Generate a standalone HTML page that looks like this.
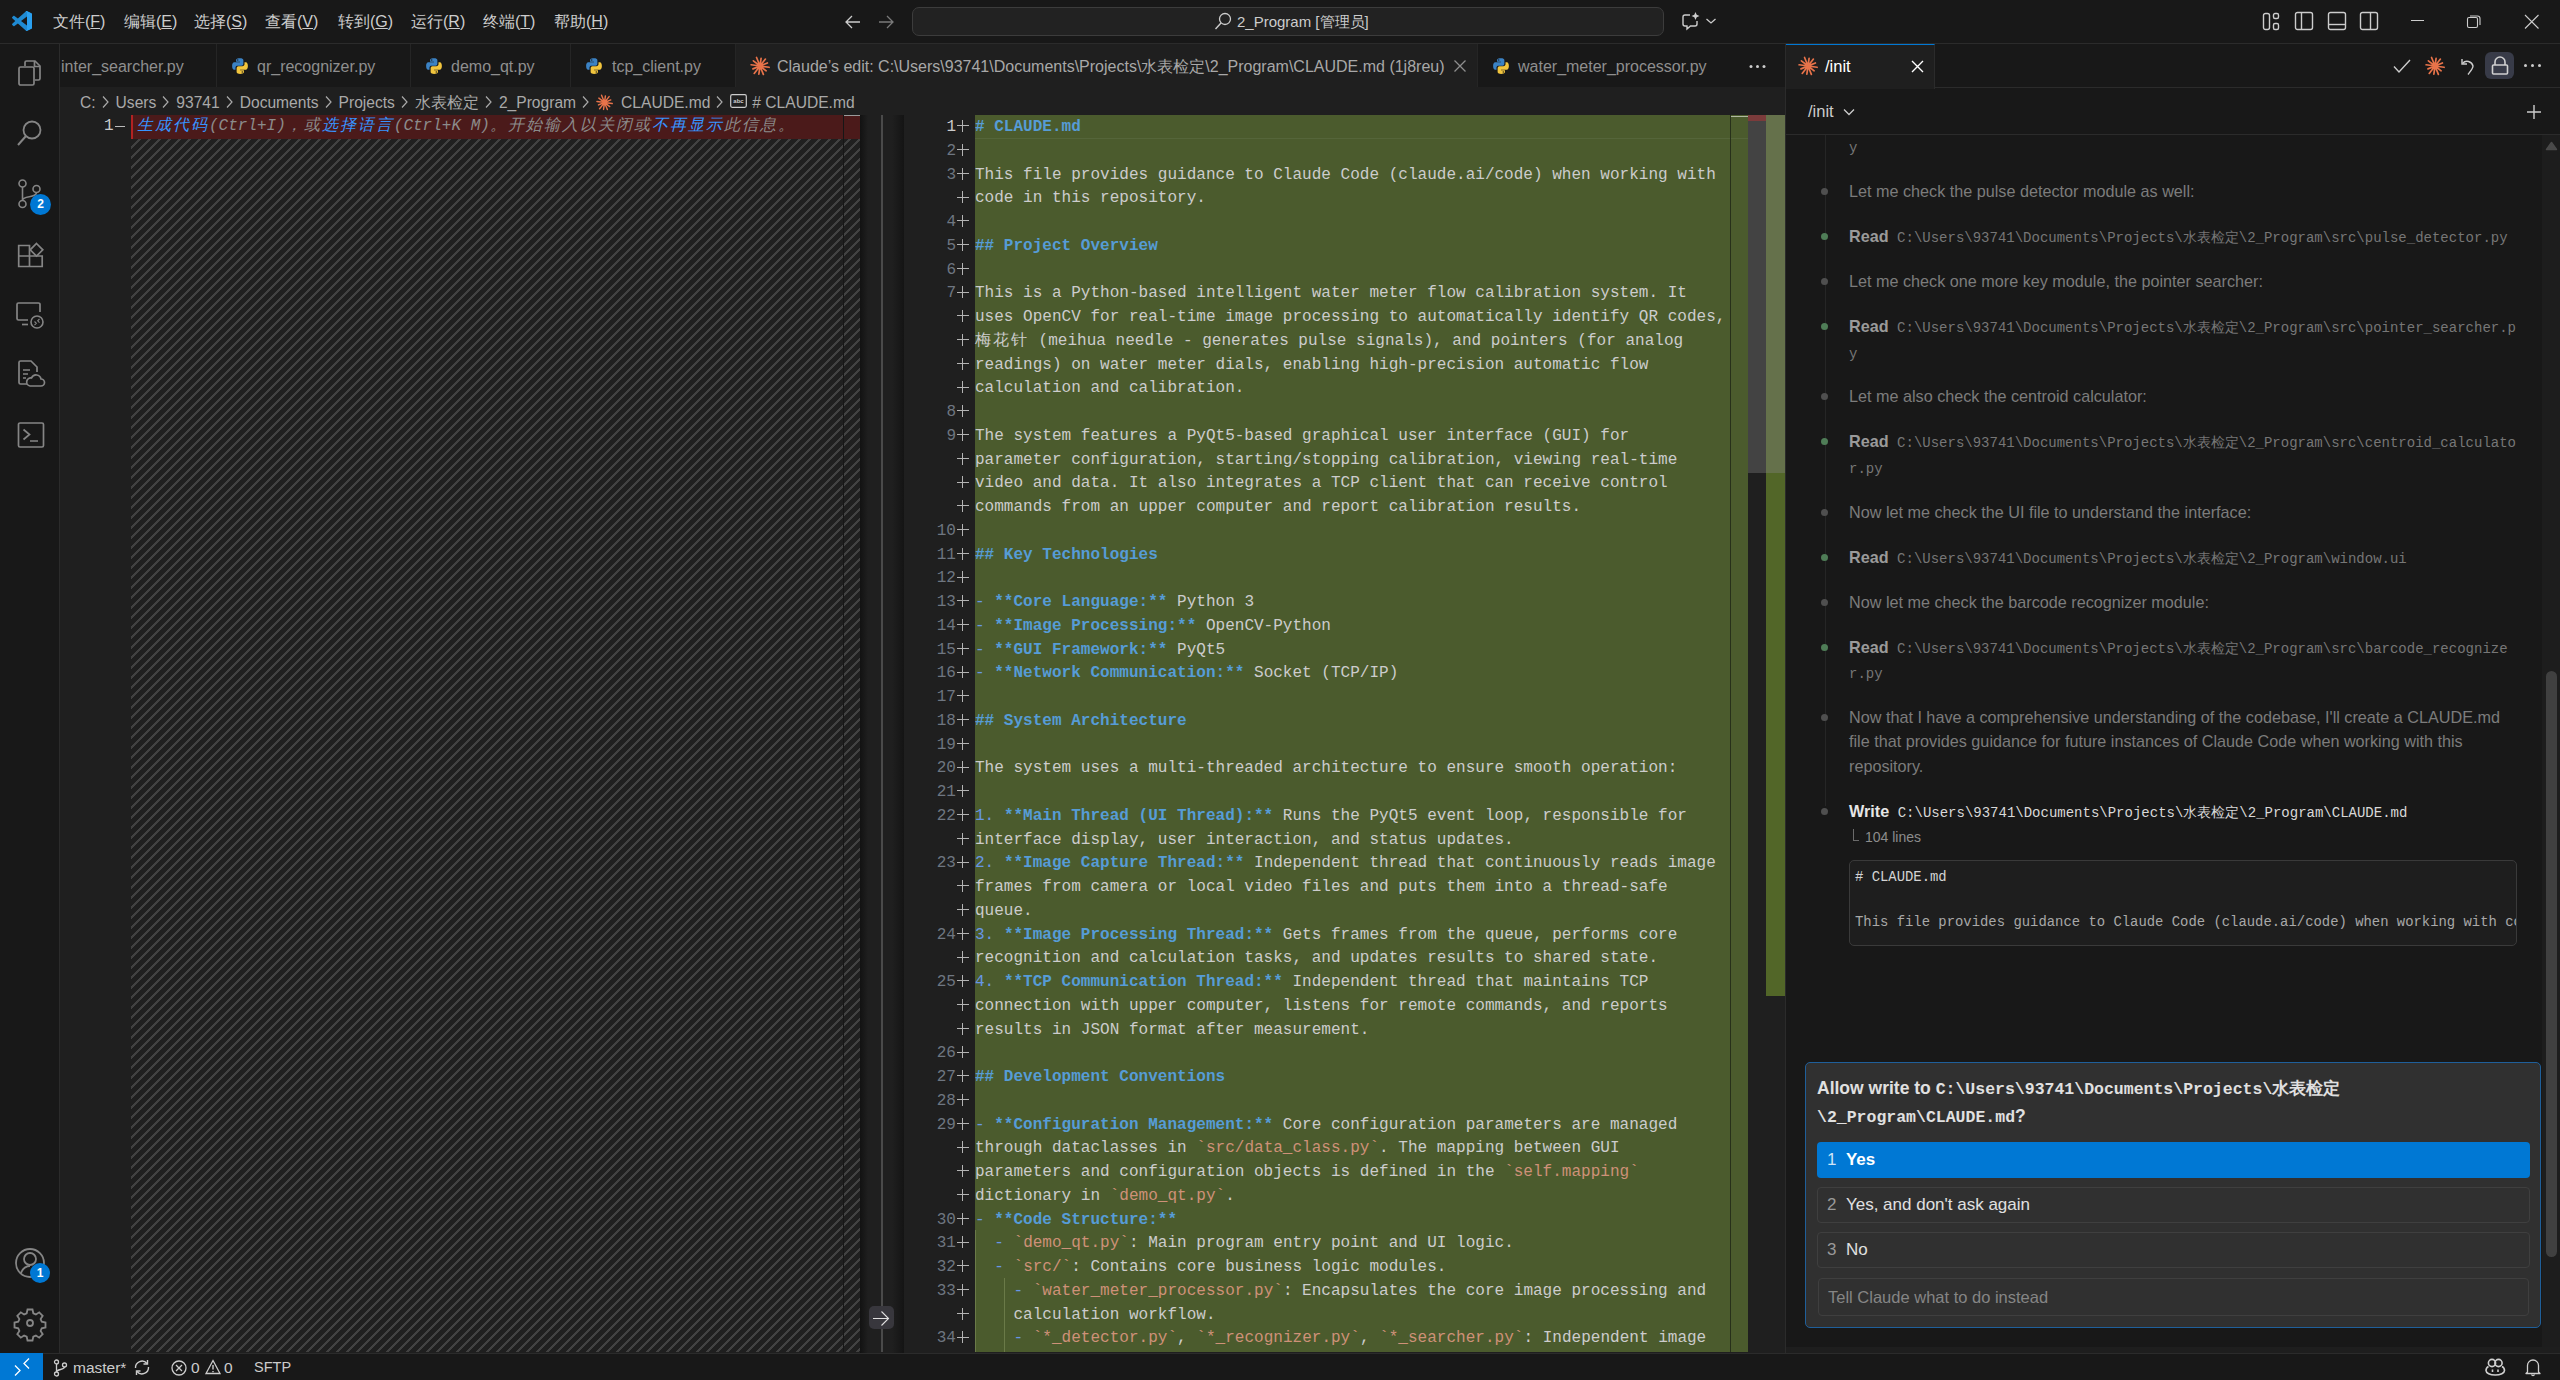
<!DOCTYPE html>
<html><head><meta charset="utf-8">
<style>
*{box-sizing:border-box;margin:0;padding:0}
html,body{width:2560px;height:1380px;overflow:hidden;background:#181818;font-family:"Liberation Sans",sans-serif;color:#cccccc}
.abs{position:absolute}
svg{position:absolute;overflow:visible}
#title{left:0;top:0;width:2560px;height:44px;background:#181818;border-bottom:1px solid #2b2b2b}
#act{left:0;top:44px;width:60px;height:1309px;background:#181818;border-right:1px solid #2b2b2b}
#status{left:0;top:1353px;width:2560px;height:27px;background:#181818;border-top:1px solid #2b2b2b}
#tabs{left:60px;top:44px;width:1725px;height:44px;background:#181818;border-bottom:1px solid #2b2b2b}
#crumbs{left:60px;top:87px;width:1725px;height:28px;background:#1f1f1f}
#ed{left:60px;top:115px;width:1725px;height:1238px;background:#1f1f1f;overflow:hidden}
#panel{left:1785px;top:44px;width:775px;height:1309px;background:#181818;border-left:1px solid #2b2b2b}
.menu{top:0;height:44px;line-height:44px;font-size:16px;color:#cccccc}
.tab{top:0;height:43px;border-right:1px solid #252525;font-size:16px;line-height:45px;color:#8f8f8f;white-space:nowrap}
.py,.st{position:absolute}
.ptx{font-size:16.2px;line-height:24px;color:#7c7c7c;white-space:nowrap}
.rd{color:#9a9a9a}
.ptx .mono{color:#767676}
.mono{font-family:"Liberation Mono",monospace}
.lstripe{background-color:#1f1f1f;background-image:linear-gradient(-45deg,#414141 18%,transparent 18%,transparent 50%,#414141 50%,#414141 68%,transparent 68%,transparent 100%);background-size:10px 10px;background-position:1px 0}
.row{position:absolute;left:0;height:24px;line-height:23.75px;font-size:16.04px;white-space:pre;width:900px}
.row .ln{position:absolute;left:0;width:50px;text-align:right;color:#6e7681}
.row .ln.act{color:#cccccc}
.row .pl{position:absolute;left:51px;top:4px;width:12px;height:12px;color:transparent;background:linear-gradient(#b4b4b4,#b4b4b4) center/12px 1.3px no-repeat,linear-gradient(#b4b4b4,#b4b4b4) center/1.3px 12px no-repeat}
.row .tx{position:absolute;left:69px;color:#cccccc}
.hd{color:#569cd6;font-weight:bold}
.bd{color:#569cd6;font-weight:bold}
.lm{color:#6796e6}
.cd{color:#ce9178}
.bt{color:#ce9178}
.lp{color:#8b8b8b}
.lk{color:#3794ff}
</style></head>
<body>
<!-- TITLE BAR -->
<div id="title" class="abs">
<svg style="left:12px;top:11px" width="20" height="20" viewBox="0 0 100 100"><path d="M96.5 10.8L75.9.9c-2.4-1.2-5.2-.7-7.1 1.2L29.4 38.1 12.2 25.1c-1.6-1.2-3.8-1.1-5.3.2l-5.5 5c-1.8 1.7-1.8 4.5 0 6.2L16.3 50 1.4 63.5c-1.8 1.7-1.8 4.5 0 6.2l5.5 5c1.5 1.3 3.700 1.4 5.300.2l17.200-13 39.400 36c1.900 1.900 4.700 2.400 7.100 1.200l20.600-9.900c2.100-1 3.500-3.200 3.500-5.600V16.4c0-2.400-1.400-4.600-3.500-5.600zM75 72.7L45.1 50 75 27.3z" fill="#1f8ad2"/><path d="M96.5 10.8L75.9.9c-2.4-1.2-5.2-.7-7.1 1.2L75 6v88l-6.200 3.900c1.900 1.900 4.700 2.400 7.100 1.200l20.600-9.900c2.100-1 3.500-3.200 3.500-5.600V16.4c0-2.400-1.400-4.600-3.500-5.600z" fill="#2aa0f0"/></svg>
<div class="abs menu" style="left:53px">文件(<u>F</u>)</div>
<div class="abs menu" style="left:124px">编辑(<u>E</u>)</div>
<div class="abs menu" style="left:194px">选择(<u>S</u>)</div>
<div class="abs menu" style="left:265px">查看(<u>V</u>)</div>
<div class="abs menu" style="left:338px">转到(<u>G</u>)</div>
<div class="abs menu" style="left:411px">运行(<u>R</u>)</div>
<div class="abs menu" style="left:483px">终端(<u>T</u>)</div>
<div class="abs menu" style="left:554px">帮助(<u>H</u>)</div>
<svg style="left:844px;top:13px" width="18" height="18" viewBox="0 0 18 18"><path d="M16 9H2M8 3L2 9l6 6" fill="none" stroke="#cccccc" stroke-width="1.3"/></svg>
<svg style="left:877px;top:13px" width="18" height="18" viewBox="0 0 18 18"><path d="M2 9h14M10 3l6 6-6 6" fill="none" stroke="#7a7a7a" stroke-width="1.3"/></svg>
<div class="abs" style="left:912px;top:7px;width:752px;height:29px;border:1px solid #3c3c3c;border-radius:7px;background:#222222"></div>
<svg style="left:1214px;top:12px" width="18" height="19" viewBox="0 0 18 19"><circle cx="11" cy="7" r="5.5" fill="none" stroke="#cccccc" stroke-width="1.3"/><path d="M7 11l-5.5 6" stroke="#cccccc" stroke-width="1.4"/></svg>
<div class="abs" style="left:1237px;top:0;height:43px;line-height:43px;font-size:15px;color:#cccccc">2_Program [管理员]</div>
<svg style="left:1681px;top:11px" width="20" height="20" viewBox="0 0 20 20"><path d="M9 4H4a2 2 0 0 0-2 2v7a2 2 0 0 0 2 2h2v3l3.5-3H14a2 2 0 0 0 2-2v-3" fill="none" stroke="#cccccc" stroke-width="1.4"/><path d="M14.5 1l1.2 2.8L18.5 5l-2.8 1.2L14.5 9l-1.2-2.8L10.5 5l2.8-1.2z" fill="#cccccc"/></svg>
<svg style="left:1705px;top:16px" width="12" height="10" viewBox="0 0 12 10"><path d="M1.5 3l4.5 4 4.5-4" fill="none" stroke="#cccccc" stroke-width="1.3"/></svg>
<svg style="left:2262px;top:12px" width="20" height="20" viewBox="0 0 20 20"><rect x="1.5" y="1.5" width="6" height="16" rx="2" fill="none" stroke="#cccccc" stroke-width="1.4"/><rect x="11.5" y="1.5" width="5" height="5" rx="1.5" fill="none" stroke="#cccccc" stroke-width="1.4"/><rect x="11.5" y="11.5" width="5" height="6" rx="1.5" fill="none" stroke="#cccccc" stroke-width="1.4"/></svg>
<svg style="left:2294px;top:11px" width="20" height="20" viewBox="0 0 20 20"><rect x="1.5" y="1.5" width="17" height="17" rx="2" fill="none" stroke="#cccccc" stroke-width="1.4"/><path d="M7.5 1.5v17" stroke="#cccccc" stroke-width="1.4"/></svg>
<svg style="left:2327px;top:11px" width="20" height="20" viewBox="0 0 20 20"><rect x="1.5" y="1.5" width="17" height="17" rx="2" fill="none" stroke="#cccccc" stroke-width="1.4"/><path d="M1.5 13.5h17" stroke="#cccccc" stroke-width="1.4"/></svg>
<svg style="left:2359px;top:11px" width="20" height="20" viewBox="0 0 20 20"><rect x="1.5" y="1.5" width="17" height="17" rx="2" fill="none" stroke="#cccccc" stroke-width="1.4"/><path d="M11.5 1.5v17" stroke="#cccccc" stroke-width="1.4"/></svg>
<div class="abs" style="left:2411px;top:20px;width:13px;height:1px;background:#cccccc"></div>
<svg style="left:2466px;top:14px" width="16" height="16" viewBox="0 0 16 16"><rect x="1.5" y="3.5" width="10" height="10" rx="1.5" fill="none" stroke="#cccccc" stroke-width="1.1"/><path d="M4 2h7.5a2.5 2.5 0 0 1 2.5 2.5V11" fill="none" stroke="#cccccc" stroke-width="1.1"/></svg>
<svg style="left:2524px;top:14px" width="16" height="16" viewBox="0 0 16 16"><path d="M1 1l13.5 13.5M14.5 1L1 14.5" stroke="#cccccc" stroke-width="1.1"/></svg>
</div>
<!-- ACTIVITY BAR -->
<div id="act" class="abs">
<svg style="left:17px;top:15px" width="26" height="28" viewBox="0 0 26 28"><path d="M8 7V3.5A1.5 1.5 0 0 1 9.5 2H18l5 5v12.5a1.5 1.5 0 0 1-1.5 1.5H18" fill="none" stroke="#858585" stroke-width="1.7"/><path d="M17.5 2v5.5H23" fill="none" stroke="#858585" stroke-width="1.7"/><rect x="2" y="8" width="15" height="18" rx="1.5" fill="none" stroke="#858585" stroke-width="1.7"/></svg>
<svg style="left:16px;top:75px" width="28" height="28" viewBox="0 0 28 28"><circle cx="16" cy="11" r="8.5" fill="none" stroke="#858585" stroke-width="1.8"/><path d="M10 17L2 26" stroke="#858585" stroke-width="2"/></svg>
<svg style="left:17px;top:134px" width="30" height="30" viewBox="0 0 30 30"><circle cx="5.5" cy="5.5" r="3.5" fill="none" stroke="#858585" stroke-width="1.6"/><circle cx="5.5" cy="26" r="3.5" fill="none" stroke="#858585" stroke-width="1.6"/><circle cx="19.5" cy="11" r="3.5" fill="none" stroke="#858585" stroke-width="1.6"/><path d="M5.5 9v13.5M19.5 14.5c0 6-14 2.5-14 8" fill="none" stroke="#858585" stroke-width="1.6"/></svg>
<div class="abs" style="left:30px;top:150px;width:21px;height:21px;border-radius:50%;background:#0078d4;color:#fff;font-size:12px;font-weight:bold;text-align:center;line-height:21px">2</div>
<svg style="left:0px;top:197px" width="60" height="30" viewBox="0 241 60 30"><path d="M18.7 245.5h10.8v21H18.7zM18.7 256h23.5v10.5H18.7zM29.5 256v10.5" fill="none" stroke="#858585" stroke-width="1.7"/><path d="M36.5 243.5l6.3 6.3-6.3 6.3-6.3-6.3z" fill="none" stroke="#858585" stroke-width="1.7"/></svg>
<svg style="left:15px;top:256px" width="30" height="30" viewBox="0 0 30 30"><path d="M13 20H3.5A1.5 1.5 0 0 1 2 18.5V4.5A1.5 1.5 0 0 1 3.5 3h20A1.5 1.5 0 0 1 25 4.5V12" fill="none" stroke="#858585" stroke-width="1.7"/><path d="M7 24.5h6" stroke="#858585" stroke-width="1.7"/><circle cx="22" cy="22" r="6" fill="none" stroke="#858585" stroke-width="1.6"/><path d="M19.5 21.5l1.8 1.8-1.8 1.8M24.5 19l-1.8 1.8 1.8 1.8" fill="none" stroke="#858585" stroke-width="1.1"/></svg>
<svg style="left:17px;top:316px" width="28" height="28" viewBox="0 0 28 28"><path d="M10 24H3.5A1.5 1.5 0 0 1 2 22.5v-20A1.5 1.5 0 0 1 3.5 1H14l6 6v5" fill="none" stroke="#858585" stroke-width="1.7"/><path d="M6 10h7M6 14h5M6 18h3" stroke="#858585" stroke-width="1.5"/><path d="M13 26h11a3.5 3.5 0 0 0 0-7 5 5 0 0 0-9.5-1A4 4 0 0 0 13 26z" fill="none" stroke="#858585" stroke-width="1.7"/></svg>
<svg style="left:17px;top:377px" width="28" height="28" viewBox="0 0 28 28"><rect x="1.5" y="2" width="25" height="24" rx="1.5" fill="none" stroke="#858585" stroke-width="1.7"/><path d="M6.5 8.5l6 5-6 5M13 20h8" fill="none" stroke="#858585" stroke-width="1.7"/></svg>
<svg style="left:15px;top:1204px" width="31" height="31" viewBox="0 0 31 31"><circle cx="15" cy="15" r="14" fill="none" stroke="#858585" stroke-width="1.8"/><circle cx="15" cy="11" r="6" fill="none" stroke="#858585" stroke-width="1.8"/><path d="M6 25c2-5 5.5-7 9-7" fill="none" stroke="#858585" stroke-width="1.8"/></svg>
<div class="abs" style="left:30px;top:1219px;width:20px;height:20px;border-radius:50%;background:#0078d4;color:#fff;font-size:12px;font-weight:bold;text-align:center;line-height:20px">1</div>
<svg style="left:15px;top:1264px" width="30" height="30" viewBox="0 0 30 30"><path d="M12.5 1.5h5l.8 3.8 2.6 1.1 3.3-2.1 3.5 3.5-2.1 3.3 1.1 2.6 3.8.8v5l-3.8.8-1.1 2.6 2.1 3.3-3.5 3.5-3.3-2.1-2.6 1.1-.8 3.8h-5l-.8-3.8-2.6-1.1-3.3 2.1-3.5-3.5 2.1-3.3-1.1-2.6-3.8-.8v-5l3.8-.8 1.1-2.6-2.1-3.3 3.5-3.5 3.3 2.1 2.6-1.1z" fill="none" stroke="#858585" stroke-width="1.8"/><circle cx="15" cy="15" r="3" fill="none" stroke="#858585" stroke-width="1.8"/></svg>
</div>
<!-- TABS -->
<div id="tabs" class="abs">
<div class="abs tab" style="left:0;width:157px"><span class="abs" style="left:1px;top:0">inter_searcher.py</span></div>
<div class="abs tab" style="left:157px;width:194px"><svg class="py" style="left:14px;top:13px" width="18" height="18" viewBox="0 0 16 16"><path d="M7.9 1C4.3 1 4.5 2.6 4.5 2.6v1.6h3.5v.5H3.1S1 4.5 1 8s1.9 3.4 1.9 3.4H4V9.7s-.1-1.9 1.9-1.9h3.3s1.8 0 1.8-1.8V2.9S11.3 1 7.9 1zM6 2.1a.6.6 0 1 1 0 1.2.6.6 0 0 1 0-1.2z" fill="#3b82c4"/><path d="M8.1 15c3.6 0 3.4-1.6 3.4-1.6v-1.6H8v-.5h4.9S15 11.5 15 8s-1.9-3.4-1.9-3.4H12v1.7s.1 1.9-1.9 1.9H6.8S5 8.2 5 10v3.1S4.7 15 8.1 15zm1.9-1.1a.6.6 0 1 1 0-1.2.6.6 0 0 1 0 1.2z" fill="#f2c53d"/></svg><span class="abs" style="left:40px;top:0">qr_recognizer.py</span></div>
<div class="abs tab" style="left:351px;width:160px"><svg class="py" style="left:14px;top:13px" width="18" height="18" viewBox="0 0 16 16"><path d="M7.9 1C4.3 1 4.5 2.6 4.5 2.6v1.6h3.5v.5H3.1S1 4.5 1 8s1.9 3.4 1.9 3.4H4V9.7s-.1-1.9 1.9-1.9h3.3s1.8 0 1.8-1.8V2.9S11.3 1 7.9 1zM6 2.1a.6.6 0 1 1 0 1.2.6.6 0 0 1 0-1.2z" fill="#3b82c4"/><path d="M8.1 15c3.6 0 3.4-1.6 3.4-1.6v-1.6H8v-.5h4.9S15 11.5 15 8s-1.9-3.4-1.9-3.4H12v1.7s.1 1.9-1.9 1.9H6.8S5 8.2 5 10v3.1S4.7 15 8.1 15zm1.9-1.1a.6.6 0 1 1 0-1.2.6.6 0 0 1 0 1.2z" fill="#f2c53d"/></svg><span class="abs" style="left:40px;top:0">demo_qt.py</span></div>
<div class="abs tab" style="left:511px;width:165px"><svg class="py" style="left:14px;top:13px" width="18" height="18" viewBox="0 0 16 16"><path d="M7.9 1C4.3 1 4.5 2.6 4.5 2.6v1.6h3.5v.5H3.1S1 4.5 1 8s1.9 3.4 1.9 3.4H4V9.7s-.1-1.9 1.9-1.9h3.3s1.8 0 1.8-1.8V2.9S11.3 1 7.9 1zM6 2.1a.6.6 0 1 1 0 1.2.6.6 0 0 1 0-1.2z" fill="#3b82c4"/><path d="M8.1 15c3.6 0 3.4-1.6 3.4-1.6v-1.6H8v-.5h4.9S15 11.5 15 8s-1.9-3.4-1.9-3.4H12v1.7s.1 1.9-1.9 1.9H6.8S5 8.2 5 10v3.1S4.7 15 8.1 15zm1.9-1.1a.6.6 0 1 1 0-1.2.6.6 0 0 1 0 1.2z" fill="#f2c53d"/></svg><span class="abs" style="left:41px;top:0">tcp_client.py</span></div>
<div class="abs tab" style="left:676px;width:742px;background:#1f1f1f;height:44px;color:#a8a8a8"><svg class="st" style="left:14px;top:12px" width="20" height="20" viewBox="-10 -10 20 20"><g stroke="#e8734a" stroke-width="1.7" stroke-linecap="round"><path d="M1.58 0.22L9.11 1.28M1.26 0.99L6.15 4.80M0.60 1.48L3.37 8.34M-0.22 1.58L-1.14 8.12M-0.99 1.26L-5.79 7.41M-1.48 0.60L-7.05 2.85M-1.58 -0.22L-8.91 -1.25M-1.26 -0.99L-6.62 -5.17M-0.60 -1.48L-3.45 -8.53M0.22 -1.58L1.09 -7.72M0.99 -1.26L5.42 -6.93M1.48 -0.60L7.42 -3.00"/><circle r="2" fill="#e8734a" stroke="none"/></g></svg><span class="abs" style="left:41px;top:0">Claude’s edit: C:\Users\93741\Documents\Projects\水表检定\2_Program\CLAUDE.md (1j8reu)</span><svg style="left:717px;top:15px" width="14" height="14" viewBox="0 0 14 14"><path d="M1.5 1.5l11 11M12.5 1.5l-11 11" stroke="#8e8e8e" stroke-width="1.3"/></svg></div>
<div class="abs tab" style="left:1418px;width:257px;border-right:none"><svg class="py" style="left:14px;top:13px" width="18" height="18" viewBox="0 0 16 16"><path d="M7.9 1C4.3 1 4.5 2.6 4.5 2.6v1.6h3.5v.5H3.1S1 4.5 1 8s1.9 3.4 1.9 3.4H4V9.7s-.1-1.9 1.9-1.9h3.3s1.8 0 1.8-1.8V2.9S11.3 1 7.9 1zM6 2.1a.6.6 0 1 1 0 1.2.6.6 0 0 1 0-1.2z" fill="#3b82c4"/><path d="M8.1 15c3.6 0 3.4-1.6 3.4-1.6v-1.6H8v-.5h4.9S15 11.5 15 8s-1.9-3.4-1.9-3.4H12v1.7s.1 1.9-1.9 1.9H6.8S5 8.2 5 10v3.1S4.7 15 8.1 15zm1.9-1.1a.6.6 0 1 1 0-1.2.6.6 0 0 1 0 1.2z" fill="#f2c53d"/></svg><span class="abs" style="left:40px;top:0">water_meter_processor.py</span></div>
<svg style="left:1689px;top:20px" width="17" height="5" viewBox="0 0 17 5"><circle cx="2" cy="2.5" r="1.5" fill="#cccccc"/><circle cx="8.5" cy="2.5" r="1.5" fill="#cccccc"/><circle cx="15" cy="2.5" r="1.5" fill="#cccccc"/></svg>
</div>
<div id="crumbs" class="abs" style="font-size:15.6px;line-height:31px;color:#a9a9a9;white-space:nowrap"><span class="abs" style="left:20px;top:0">C:<svg width="9" height="14" viewBox="0 0 9 14" style="position:relative;display:inline-block;vertical-align:-1px;margin:0 6px 0 5px"><path d="M2 1.5l5 5.5-5 5.5" fill="none" stroke="#a9a9a9" stroke-width="1.2"/></svg>Users<svg width="9" height="14" viewBox="0 0 9 14" style="position:relative;display:inline-block;vertical-align:-1px;margin:0 6px 0 5px"><path d="M2 1.5l5 5.5-5 5.5" fill="none" stroke="#a9a9a9" stroke-width="1.2"/></svg>93741<svg width="9" height="14" viewBox="0 0 9 14" style="position:relative;display:inline-block;vertical-align:-1px;margin:0 6px 0 5px"><path d="M2 1.5l5 5.5-5 5.5" fill="none" stroke="#a9a9a9" stroke-width="1.2"/></svg>Documents<svg width="9" height="14" viewBox="0 0 9 14" style="position:relative;display:inline-block;vertical-align:-1px;margin:0 6px 0 5px"><path d="M2 1.5l5 5.5-5 5.5" fill="none" stroke="#a9a9a9" stroke-width="1.2"/></svg>Projects<svg width="9" height="14" viewBox="0 0 9 14" style="position:relative;display:inline-block;vertical-align:-1px;margin:0 6px 0 5px"><path d="M2 1.5l5 5.5-5 5.5" fill="none" stroke="#a9a9a9" stroke-width="1.2"/></svg>水表检定<svg width="9" height="14" viewBox="0 0 9 14" style="position:relative;display:inline-block;vertical-align:-1px;margin:0 6px 0 5px"><path d="M2 1.5l5 5.5-5 5.5" fill="none" stroke="#a9a9a9" stroke-width="1.2"/></svg>2_Program<svg width="9" height="14" viewBox="0 0 9 14" style="position:relative;display:inline-block;vertical-align:-1px;margin:0 6px 0 5px"><path d="M2 1.5l5 5.5-5 5.5" fill="none" stroke="#a9a9a9" stroke-width="1.2"/></svg><svg width="17" height="17" style="position:relative;display:inline-block;vertical-align:-3px;margin-right:8px" viewBox="-10 -10 20 20"><g stroke="#e8734a" stroke-width="1.7" stroke-linecap="round"><path d="M1.58 0.22L9.11 1.28M1.26 0.99L6.15 4.80M0.60 1.48L3.37 8.34M-0.22 1.58L-1.14 8.12M-0.99 1.26L-5.79 7.41M-1.48 0.60L-7.05 2.85M-1.58 -0.22L-8.91 -1.25M-1.26 -0.99L-6.62 -5.17M-0.60 -1.48L-3.45 -8.53M0.22 -1.58L1.09 -7.72M0.99 -1.26L5.42 -6.93M1.48 -0.60L7.42 -3.00"/><circle r="2" fill="#e8734a" stroke="none"/></g></svg>CLAUDE.md<svg width="9" height="14" viewBox="0 0 9 14" style="position:relative;display:inline-block;vertical-align:-1px;margin:0 6px 0 5px"><path d="M2 1.5l5 5.5-5 5.5" fill="none" stroke="#a9a9a9" stroke-width="1.2"/></svg><svg width="17" height="14" viewBox="0 0 17 14" style="position:relative;display:inline-block;vertical-align:0px;margin-right:5px"><rect x="0.7" y="0.7" width="15.6" height="12.6" rx="1.5" fill="none" stroke="#cccccc" stroke-width="1.2"/><text x="8.5" y="9" font-size="6" fill="#cccccc" text-anchor="middle" font-family="Liberation Sans" font-weight="bold">abc</text></svg># CLAUDE.md</span></div>
<div id="ed" class="abs">
<!-- left pane -->
<div class="abs" style="left:71px;top:0;width:729px;height:24px;background:#4b1a1a"></div>
<div class="abs" style="left:71px;top:0;width:2px;height:24px;background:#b22222"></div>
<div class="abs lstripe" style="left:71px;top:24px;width:729px;height:1213px"></div>
<div class="abs mono" style="left:44px;top:0;height:24px;line-height:23px;font-size:16px;color:#cccccc">1</div>
<div class="abs" style="left:55px;top:11px;width:10px;height:1px;background:#bbbbbb"></div>
<div class="abs mono lp" style="left:77px;top:0;height:24px;line-height:23px;font-size:16px;font-style:italic;white-space:pre"><span class="lk"><span style="letter-spacing:2px">生成代码</span></span>(Ctrl+I)<span style="letter-spacing:2px">，或</span><span class="lk"><span style="letter-spacing:2px">选择语言</span></span>(Ctrl+K M)<span style="letter-spacing:2px">。开始输入以关闭或</span><span class="lk"><span style="letter-spacing:2px">不再显示</span></span><span style="letter-spacing:2px">此信息。</span></div>
<div class="abs" style="left:783px;top:0;width:1px;height:1237px;background:#161616"></div>
<div class="abs" style="left:784px;top:0;width:16px;height:1px;background:#9a9a9a"></div>
<div class="abs" style="left:800px;top:0;width:8px;height:1238px;background:linear-gradient(90deg,#121212,#1f1f1f)"></div>
<!-- sash -->
<div class="abs" style="left:821px;top:0;width:2px;height:1237px;background:#4a4a4a"></div>
<div class="abs" style="left:809px;top:1191px;width:25px;height:23px;border-radius:5px;background:#38373d;z-index:3"></div>
<svg style="left:812px;top:1194px;z-index:4" width="18" height="18" viewBox="0 0 18 18"><path d="M1 9.5h16M9.5 2.5l7 7-7 7" fill="none" stroke="#e0e0e0" stroke-width="1.1"/></svg>
<!-- right pane -->
<div class="abs" style="left:832px;top:0;width:12px;height:1238px;background:linear-gradient(90deg,#1f1f1f,#141414)"></div>
<div class="abs" style="left:915px;top:0;width:773px;height:1237px;background:#4b5b2d"></div>
<div class="abs" style="left:915px;top:23px;width:773px;height:1px;background:#55653a"></div>
<div class="abs" style="left:1670px;top:0;width:1px;height:1237px;background:#27301a"></div>
<div class="abs" style="left:915px;top:1115px;width:1px;height:122px;background:#6a7a48"></div>
<div class="abs" style="left:944px;top:1163px;width:1px;height:74px;background:#6a7a48"></div>
<div class="abs" style="left:1688px;top:0;width:18px;height:358px;background:#434343"></div>
<div class="abs" style="left:1688px;top:0;width:18px;height:6px;background:#7b3b3b"></div>
<div class="abs" style="left:1671px;top:1px;width:17px;height:1px;background:#b0b8a0"></div>
<div class="abs" style="left:1706px;top:0;width:19px;height:358px;background:#65714b"></div>
<div class="abs" style="left:1706px;top:358px;width:19px;height:523px;background:#526628"></div>
<div class="abs" style="left:1725px;top:0;width:1px;height:1237px;background:#2b2b2b"></div>
<div id="rows" class="abs mono" style="left:846px;top:1px;width:900px;height:1237px">
<div class="row" style="top:0.00px"><span class="ln act">1</span><span class="pl">+</span><span class="tx"><b class="hd"># CLAUDE.md</b></span></div>
<div class="row" style="top:23.75px"><span class="ln">2</span><span class="pl">+</span><span class="tx"></span></div>
<div class="row" style="top:47.50px"><span class="ln">3</span><span class="pl">+</span><span class="tx">This file provides guidance to Claude Code (claude.ai/code) when working with</span></div>
<div class="row" style="top:71.25px"><span class="ln"></span><span class="pl">+</span><span class="tx">code in this repository.</span></div>
<div class="row" style="top:95.00px"><span class="ln">4</span><span class="pl">+</span><span class="tx"></span></div>
<div class="row" style="top:118.75px"><span class="ln">5</span><span class="pl">+</span><span class="tx"><b class="hd">## Project Overview</b></span></div>
<div class="row" style="top:142.50px"><span class="ln">6</span><span class="pl">+</span><span class="tx"></span></div>
<div class="row" style="top:166.25px"><span class="ln">7</span><span class="pl">+</span><span class="tx">This is a Python-based intelligent water meter flow calibration system. It</span></div>
<div class="row" style="top:190.00px"><span class="ln"></span><span class="pl">+</span><span class="tx">uses OpenCV for real-time image processing to automatically identify QR codes,</span></div>
<div class="row" style="top:213.75px"><span class="ln"></span><span class="pl">+</span><span class="tx"><span style="letter-spacing:2px">梅花针</span> (meihua needle - generates pulse signals), and pointers (for analog</span></div>
<div class="row" style="top:237.50px"><span class="ln"></span><span class="pl">+</span><span class="tx">readings) on water meter dials, enabling high-precision automatic flow</span></div>
<div class="row" style="top:261.25px"><span class="ln"></span><span class="pl">+</span><span class="tx">calculation and calibration.</span></div>
<div class="row" style="top:285.00px"><span class="ln">8</span><span class="pl">+</span><span class="tx"></span></div>
<div class="row" style="top:308.75px"><span class="ln">9</span><span class="pl">+</span><span class="tx">The system features a PyQt5-based graphical user interface (GUI) for</span></div>
<div class="row" style="top:332.50px"><span class="ln"></span><span class="pl">+</span><span class="tx">parameter configuration, starting/stopping calibration, viewing real-time</span></div>
<div class="row" style="top:356.25px"><span class="ln"></span><span class="pl">+</span><span class="tx">video and data. It also integrates a TCP client that can receive control</span></div>
<div class="row" style="top:380.00px"><span class="ln"></span><span class="pl">+</span><span class="tx">commands from an upper computer and report calibration results.</span></div>
<div class="row" style="top:403.75px"><span class="ln">10</span><span class="pl">+</span><span class="tx"></span></div>
<div class="row" style="top:427.50px"><span class="ln">11</span><span class="pl">+</span><span class="tx"><b class="hd">## Key Technologies</b></span></div>
<div class="row" style="top:451.25px"><span class="ln">12</span><span class="pl">+</span><span class="tx"></span></div>
<div class="row" style="top:475.00px"><span class="ln">13</span><span class="pl">+</span><span class="tx"><span class="lm">-</span> <b class="bd">**Core Language:**</b> Python 3</span></div>
<div class="row" style="top:498.75px"><span class="ln">14</span><span class="pl">+</span><span class="tx"><span class="lm">-</span> <b class="bd">**Image Processing:**</b> OpenCV-Python</span></div>
<div class="row" style="top:522.50px"><span class="ln">15</span><span class="pl">+</span><span class="tx"><span class="lm">-</span> <b class="bd">**GUI Framework:**</b> PyQt5</span></div>
<div class="row" style="top:546.25px"><span class="ln">16</span><span class="pl">+</span><span class="tx"><span class="lm">-</span> <b class="bd">**Network Communication:**</b> Socket (TCP/IP)</span></div>
<div class="row" style="top:570.00px"><span class="ln">17</span><span class="pl">+</span><span class="tx"></span></div>
<div class="row" style="top:593.75px"><span class="ln">18</span><span class="pl">+</span><span class="tx"><b class="hd">## System Architecture</b></span></div>
<div class="row" style="top:617.50px"><span class="ln">19</span><span class="pl">+</span><span class="tx"></span></div>
<div class="row" style="top:641.25px"><span class="ln">20</span><span class="pl">+</span><span class="tx">The system uses a multi-threaded architecture to ensure smooth operation:</span></div>
<div class="row" style="top:665.00px"><span class="ln">21</span><span class="pl">+</span><span class="tx"></span></div>
<div class="row" style="top:688.75px"><span class="ln">22</span><span class="pl">+</span><span class="tx"><span class="lm">1.</span> <b class="bd">**Main Thread (UI Thread):**</b> Runs the PyQt5 event loop, responsible for</span></div>
<div class="row" style="top:712.50px"><span class="ln"></span><span class="pl">+</span><span class="tx">interface display, user interaction, and status updates.</span></div>
<div class="row" style="top:736.25px"><span class="ln">23</span><span class="pl">+</span><span class="tx"><span class="lm">2.</span> <b class="bd">**Image Capture Thread:**</b> Independent thread that continuously reads image</span></div>
<div class="row" style="top:760.00px"><span class="ln"></span><span class="pl">+</span><span class="tx">frames from camera or local video files and puts them into a thread-safe</span></div>
<div class="row" style="top:783.75px"><span class="ln"></span><span class="pl">+</span><span class="tx">queue.</span></div>
<div class="row" style="top:807.50px"><span class="ln">24</span><span class="pl">+</span><span class="tx"><span class="lm">3.</span> <b class="bd">**Image Processing Thread:**</b> Gets frames from the queue, performs core</span></div>
<div class="row" style="top:831.25px"><span class="ln"></span><span class="pl">+</span><span class="tx">recognition and calculation tasks, and updates results to shared state.</span></div>
<div class="row" style="top:855.00px"><span class="ln">25</span><span class="pl">+</span><span class="tx"><span class="lm">4.</span> <b class="bd">**TCP Communication Thread:**</b> Independent thread that maintains TCP</span></div>
<div class="row" style="top:878.75px"><span class="ln"></span><span class="pl">+</span><span class="tx">connection with upper computer, listens for remote commands, and reports</span></div>
<div class="row" style="top:902.50px"><span class="ln"></span><span class="pl">+</span><span class="tx">results in JSON format after measurement.</span></div>
<div class="row" style="top:926.25px"><span class="ln">26</span><span class="pl">+</span><span class="tx"></span></div>
<div class="row" style="top:950.00px"><span class="ln">27</span><span class="pl">+</span><span class="tx"><b class="hd">## Development Conventions</b></span></div>
<div class="row" style="top:973.75px"><span class="ln">28</span><span class="pl">+</span><span class="tx"></span></div>
<div class="row" style="top:997.50px"><span class="ln">29</span><span class="pl">+</span><span class="tx"><span class="lm">-</span> <b class="bd">**Configuration Management:**</b> Core configuration parameters are managed</span></div>
<div class="row" style="top:1021.25px"><span class="ln"></span><span class="pl">+</span><span class="tx">through dataclasses in <span class="bt">`</span><span class="cd">src/data_class.py</span><span class="bt">`</span>. The mapping between GUI</span></div>
<div class="row" style="top:1045.00px"><span class="ln"></span><span class="pl">+</span><span class="tx">parameters and configuration objects is defined in the <span class="bt">`</span><span class="cd">self.mapping</span><span class="bt">`</span></span></div>
<div class="row" style="top:1068.75px"><span class="ln"></span><span class="pl">+</span><span class="tx">dictionary in <span class="bt">`</span><span class="cd">demo_qt.py</span><span class="bt">`</span>.</span></div>
<div class="row" style="top:1092.50px"><span class="ln">30</span><span class="pl">+</span><span class="tx"><span class="lm">-</span> <b class="bd">**Code Structure:**</b></span></div>
<div class="row" style="top:1116.25px"><span class="ln">31</span><span class="pl">+</span><span class="tx">  <span class="lm">-</span> <span class="bt">`</span><span class="cd">demo_qt.py</span><span class="bt">`</span>: Main program entry point and UI logic.</span></div>
<div class="row" style="top:1140.00px"><span class="ln">32</span><span class="pl">+</span><span class="tx">  <span class="lm">-</span> <span class="bt">`</span><span class="cd">src/</span><span class="bt">`</span>: Contains core business logic modules.</span></div>
<div class="row" style="top:1163.75px"><span class="ln">33</span><span class="pl">+</span><span class="tx">    <span class="lm">-</span> <span class="bt">`</span><span class="cd">water_meter_processor.py</span><span class="bt">`</span>: Encapsulates the core image processing and</span></div>
<div class="row" style="top:1187.50px"><span class="ln"></span><span class="pl">+</span><span class="tx">    calculation workflow.</span></div>
<div class="row" style="top:1211.25px"><span class="ln">34</span><span class="pl">+</span><span class="tx">    <span class="lm">-</span> <span class="bt">`</span><span class="cd">*_detector.py</span><span class="bt">`</span>, <span class="bt">`</span><span class="cd">*_recognizer.py</span><span class="bt">`</span>, <span class="bt">`</span><span class="cd">*_searcher.py</span><span class="bt">`</span>: Independent image</span></div>
<div class="row" style="top:1235.00px"><span class="ln"></span><span class="pl">+</span><span class="tx">    processing modules for specific recognition tasks.</span></div>
</div>
</div>
<div id="panel" class="abs">
<div class="abs" style="left:0;top:0;width:774px;height:44px;border-bottom:1px solid #2b2b2b"></div>
<div class="abs" style="left:0;top:0;width:149px;height:45px;background:#1f1f1f;border-top:1px solid #0078d4;border-right:1px solid #2b2b2b"></div>
<svg class="st" style="left:12px;top:12px" width="20" height="20" viewBox="-10 -10 20 20"><g stroke="#e8734a" stroke-width="1.7" stroke-linecap="round"><path d="M1.58 0.22L9.11 1.28M1.26 0.99L6.15 4.80M0.60 1.48L3.37 8.34M-0.22 1.58L-1.14 8.12M-0.99 1.26L-5.79 7.41M-1.48 0.60L-7.05 2.85M-1.58 -0.22L-8.91 -1.25M-1.26 -0.99L-6.62 -5.17M-0.60 -1.48L-3.45 -8.53M0.22 -1.58L1.09 -7.72M0.99 -1.26L5.42 -6.93M1.48 -0.60L7.42 -3.00"/><circle r="2" fill="#e8734a" stroke="none"/></g></svg>
<div class="abs" style="left:39px;top:0;height:44px;line-height:44px;font-size:16.5px;color:#ffffff">/init</div>
<svg style="left:125px;top:16px" width="13" height="13" viewBox="0 0 13 13"><path d="M1 1l11 11M12 1L1 12" stroke="#ffffff" stroke-width="1.4"/></svg>
<svg style="left:607px;top:15px" width="18" height="15" viewBox="0 0 18 15"><path d="M1 7.5l5 5.5L17 1" fill="none" stroke="#cccccc" stroke-width="1.4"/></svg>
<svg class="st" style="left:639px;top:12px" width="20" height="20" viewBox="-10 -10 20 20"><g stroke="#e8734a" stroke-width="1.7" stroke-linecap="round"><path d="M1.58 0.22L9.11 1.28M1.26 0.99L6.15 4.80M0.60 1.48L3.37 8.34M-0.22 1.58L-1.14 8.12M-0.99 1.26L-5.79 7.41M-1.48 0.60L-7.05 2.85M-1.58 -0.22L-8.91 -1.25M-1.26 -0.99L-6.62 -5.17M-0.60 -1.48L-3.45 -8.53M0.22 -1.58L1.09 -7.72M0.99 -1.26L5.42 -6.93M1.48 -0.60L7.42 -3.00"/><circle r="2" fill="#e8734a" stroke="none"/></g></svg>
<svg style="left:674px;top:13px" width="16" height="19" viewBox="0 0 16 19"><path d="M2 2v5h5" fill="none" stroke="#cccccc" stroke-width="1.4"/><path d="M2.5 6.5A6 6 0 0 1 13 9c0 2.5-2 4.5-5 8.5" fill="none" stroke="#cccccc" stroke-width="1.4"/></svg>
<div class="abs" style="left:699px;top:8px;width:29px;height:27px;border-radius:6px;background:#383b48"></div>
<svg style="left:705px;top:12px" width="18" height="20" viewBox="0 0 18 20"><path d="M4 9V6a5 5 0 0 1 10 0v3" fill="none" stroke="#d0d0d0" stroke-width="1.6"/><rect x="1.5" y="9" width="15" height="9" rx="1" fill="none" stroke="#d0d0d0" stroke-width="1.6"/></svg>
<svg style="left:737px;top:19px" width="20" height="5" viewBox="0 0 20 5"><circle cx="2.5" cy="2.5" r="1.5" fill="#cccccc"/><circle cx="9.5" cy="2.5" r="1.5" fill="#cccccc"/><circle cx="16.5" cy="2.5" r="1.5" fill="#cccccc"/></svg>
<div class="abs" style="left:0;top:90px;width:774px;height:1px;background:#2b2b2b"></div>
<div class="abs" style="left:22px;top:44px;height:46px;line-height:46px;font-size:16.5px;color:#cccccc">/init</div>
<svg style="left:57px;top:64px" width="12" height="8" viewBox="0 0 12 8"><path d="M1 1.5l5 5 5-5" fill="none" stroke="#cccccc" stroke-width="1.3"/></svg>
<svg style="left:741px;top:61px" width="14" height="14" viewBox="0 0 14 14"><path d="M7 0v14M0 7h14" stroke="#cccccc" stroke-width="1.4"/></svg>
<div class="abs" style="left:39px;top:91px;width:1px;height:671px;background:#262626"></div>
<div class="abs" style="left:756px;top:91px;width:19px;height:1212px;background:#1d1d1d"></div>
<svg style="left:759px;top:97px" width="13" height="10" viewBox="0 0 13 10"><path d="M6.5 1.5l5 7h-10z" fill="#4a4a4a" stroke="#4a4a4a" stroke-width="1.5" stroke-linejoin="round"/></svg>
<div class="abs" style="left:760px;top:627px;width:11px;height:586px;border-radius:6px;background:#404040"></div>
<div class="abs ptx" style="left:63px;top:90px;"><span class="mono" style="font-size:14px">y</span></div>
<div class="abs" style="left:35px;top:144px;width:7px;height:7px;border-radius:50%;background:#4f4f4f"></div>
<div class="abs ptx" style="left:63px;top:135px;">Let me check the pulse detector module as well:</div>
<div class="abs" style="left:35px;top:189px;width:7px;height:7px;border-radius:50%;background:#4f7d57"></div>
<div class="abs ptx" style="left:63px;top:180px;"><b class="rd">Read</b> <span class="mono" style="font-size:14px;margin-left:4px">C:\Users\93741\Documents\Projects\水表检定\2_Program\src\pulse_detector.py</span></div>
<div class="abs" style="left:35px;top:234px;width:7px;height:7px;border-radius:50%;background:#4f4f4f"></div>
<div class="abs ptx" style="left:63px;top:225px;">Let me check one more key module, the pointer searcher:</div>
<div class="abs" style="left:35px;top:279px;width:7px;height:7px;border-radius:50%;background:#4f7d57"></div>
<div class="abs ptx" style="left:63px;top:270px;"><b class="rd">Read</b> <span class="mono" style="font-size:14px;margin-left:4px">C:\Users\93741\Documents\Projects\水表检定\2_Program\src\pointer_searcher.p</span></div>
<div class="abs ptx" style="left:63px;top:296px;"><span class="mono" style="font-size:14px">y</span></div>
<div class="abs" style="left:35px;top:349px;width:7px;height:7px;border-radius:50%;background:#4f4f4f"></div>
<div class="abs ptx" style="left:63px;top:340px;">Let me also check the centroid calculator:</div>
<div class="abs" style="left:35px;top:394px;width:7px;height:7px;border-radius:50%;background:#4f7d57"></div>
<div class="abs ptx" style="left:63px;top:385px;"><b class="rd">Read</b> <span class="mono" style="font-size:14px;margin-left:4px">C:\Users\93741\Documents\Projects\水表检定\2_Program\src\centroid_calculato</span></div>
<div class="abs ptx" style="left:63px;top:411px;"><span class="mono" style="font-size:14px">r.py</span></div>
<div class="abs" style="left:35px;top:465px;width:7px;height:7px;border-radius:50%;background:#4f4f4f"></div>
<div class="abs ptx" style="left:63px;top:456px;">Now let me check the UI file to understand the interface:</div>
<div class="abs" style="left:35px;top:510px;width:7px;height:7px;border-radius:50%;background:#4f7d57"></div>
<div class="abs ptx" style="left:63px;top:501px;"><b class="rd">Read</b> <span class="mono" style="font-size:14px;margin-left:4px">C:\Users\93741\Documents\Projects\水表检定\2_Program\window.ui</span></div>
<div class="abs" style="left:35px;top:555px;width:7px;height:7px;border-radius:50%;background:#4f4f4f"></div>
<div class="abs ptx" style="left:63px;top:546px;">Now let me check the barcode recognizer module:</div>
<div class="abs" style="left:35px;top:600px;width:7px;height:7px;border-radius:50%;background:#4f7d57"></div>
<div class="abs ptx" style="left:63px;top:591px;"><b class="rd">Read</b> <span class="mono" style="font-size:14px;margin-left:4px">C:\Users\93741\Documents\Projects\水表检定\2_Program\src\barcode_recognize</span></div>
<div class="abs ptx" style="left:63px;top:616px;"><span class="mono" style="font-size:14px">r.py</span></div>
<div class="abs" style="left:35px;top:670px;width:7px;height:7px;border-radius:50%;background:#4f4f4f"></div>
<div class="abs ptx" style="left:63px;top:661px;">Now that I have a comprehensive understanding of the codebase, I'll create a CLAUDE.md</div>
<div class="abs ptx" style="left:63px;top:685px;">file that provides guidance for future instances of Claude Code when working with this</div>
<div class="abs ptx" style="left:63px;top:710px;">repository.</div>
<div class="abs" style="left:35px;top:764px;width:7px;height:7px;border-radius:50%;background:#4f4f4f"></div>
<div class="abs ptx" style="left:63px;top:755px;"><b style="color:#e6e6e6">Write</b> <span class="mono" style="font-size:14px;margin-left:4px;color:#d8d8d8">C:\Users\93741\Documents\Projects\水表检定\2_Program\CLAUDE.md</span></div>
<div class="abs" style="left:67px;top:785px;width:6px;height:12px;border-left:1px solid #6a6a6a;border-bottom:1px solid #6a6a6a"></div>
<div class="abs ptx" style="left:79px;top:781px;font-size:14px;color:#8c8c8c">104 lines</div>
<div class="abs" style="left:63px;top:816px;width:668px;height:86px;border:1px solid #3a3a3a;border-radius:5px;background:#1e1e1e;overflow:hidden"><div class="abs mono" style="left:5px;top:-6px;font-size:13.9px;line-height:45px;white-space:pre;color:#d4d4d4"># CLAUDE.md<br><span style="color:#a8a8a8">This file provides guidance to Claude Code (claude.ai/code) when working with code in this repository.</span></div></div>


<div class="abs" style="left:0;top:1303px;width:775px;height:6px;background:#1e1e1e"></div>
<!-- modal -->
<div class="abs" style="left:19px;top:1018px;width:736px;height:266px;border:1.5px solid #1f5f9a;border-radius:5px;background:#303030"></div>
<div class="abs" style="left:31px;top:1031px;line-height:27px;font-size:17.5px;font-weight:bold;color:#e0e0e0;white-space:nowrap">Allow write to <span class="mono" style="font-size:16.5px">C:\Users\93741\Documents\Projects\水表检定</span><br><span class="mono" style="font-size:16.5px">\2_Program\CLAUDE.md</span>?</div>
<div class="abs" style="left:31px;top:1098px;width:713px;height:36px;border-radius:4px;background:#0078d4"></div>
<div class="abs" style="left:41px;top:1098px;line-height:36px;font-size:17px;color:#ffffff"><span style="color:#cfe4f7">1</span>&nbsp;&nbsp;<b>Yes</b></div>
<div class="abs" style="left:31px;top:1143px;width:713px;height:36px;border-radius:4px;border:1px solid #3f3f3f;background:#303030"></div>
<div class="abs" style="left:41px;top:1143px;line-height:36px;font-size:17px;color:#e0e0e0"><span style="color:#999">2</span>&nbsp;&nbsp;Yes, and don't ask again</div>
<div class="abs" style="left:31px;top:1188px;width:713px;height:36px;border-radius:4px;border:1px solid #3f3f3f;background:#303030"></div>
<div class="abs" style="left:41px;top:1188px;line-height:36px;font-size:17px;color:#e0e0e0"><span style="color:#999">3</span>&nbsp;&nbsp;No</div>
<div class="abs" style="left:32px;top:1234px;width:711px;height:38px;border-radius:4px;border:1px solid #3f3f3f;background:#303030"></div>
<div class="abs" style="left:42px;top:1234px;line-height:38px;font-size:16.5px;color:#858585">Tell Claude what to do instead</div>
</div>
<div id="status" class="abs">
<div class="abs" style="left:0;top:-1px;width:43px;height:28px;background:#0078d4"></div>
<svg style="left:14px;top:5px" width="16" height="16" viewBox="0 0 16 16"><path d="M1 13.5l5-5-5-5" fill="none" stroke="#ffffff" stroke-width="1.3" transform="translate(0,3)"/><path d="M15 2.5l-5 5 5 5" fill="none" stroke="#ffffff" stroke-width="1.3" transform="translate(0,-3)"/></svg>
<svg style="left:53px;top:5px" width="15" height="18" viewBox="0 0 15 18"><circle cx="3.5" cy="3" r="2" fill="none" stroke="#cccccc" stroke-width="1.3"/><circle cx="3.5" cy="15" r="2" fill="none" stroke="#cccccc" stroke-width="1.3"/><circle cx="11.5" cy="6" r="2" fill="none" stroke="#cccccc" stroke-width="1.3"/><path d="M3.5 5v8M11.5 8c0 3-8 2-8 5" fill="none" stroke="#cccccc" stroke-width="1.3"/></svg>
<div class="abs" style="left:73px;top:0;line-height:27px;font-size:15.5px;color:#cccccc">master*</div>
<svg style="left:133px;top:5px" width="18" height="17" viewBox="0 0 18 17"><path d="M2.5 9A6.5 6.5 0 0 1 14 4.5M15.5 8A6.5 6.5 0 0 1 4 12.5" fill="none" stroke="#cccccc" stroke-width="1.4"/><path d="M14.5 1v4h-4M3.5 16v-4h4" fill="none" stroke="#cccccc" stroke-width="1.4"/></svg>
<svg style="left:171px;top:6px" width="16" height="16" viewBox="0 0 16 16"><circle cx="8" cy="8" r="7" fill="none" stroke="#cccccc" stroke-width="1.3"/><path d="M5 5l6 6M11 5l-6 6" stroke="#cccccc" stroke-width="1.3"/></svg>
<div class="abs" style="left:191px;top:0;line-height:27px;font-size:15.5px;color:#cccccc">0</div>
<svg style="left:205px;top:5px" width="16" height="16" viewBox="0 0 16 16"><path d="M8 1.5L15 14.5H1z" fill="none" stroke="#cccccc" stroke-width="1.3"/><path d="M8 6v4.5M8 12v1.2" stroke="#cccccc" stroke-width="1.4"/></svg>
<div class="abs" style="left:224px;top:0;line-height:27px;font-size:15.5px;color:#cccccc">0</div>
<div class="abs" style="left:254px;top:0;line-height:27px;font-size:14.5px;color:#cccccc">SFTP</div>
<svg style="left:2484px;top:3px" width="24" height="20" viewBox="0 0 24 20"><circle cx="8" cy="6" r="3.6" fill="none" stroke="#d0d0d0" stroke-width="1.6"/><circle cx="14.5" cy="6" r="3.6" fill="none" stroke="#d0d0d0" stroke-width="1.6"/><path d="M4.5 9.5C2.5 10.5 2 12 2 13.5c0 2.5 4 4.5 9.25 4.5s9.25-2 9.25-4.5c0-1.5-.5-3-2.5-4" fill="none" stroke="#d0d0d0" stroke-width="1.6"/><path d="M8.5 12.5v2.5M14 12.5v2.5" stroke="#d0d0d0" stroke-width="1.6"/></svg>
<svg style="left:2524px;top:3px" width="18" height="20" viewBox="0 0 18 20"><path d="M3.5 15V8.5a5.5 5.5 0 0 1 11 0V15l1.5 1.5H2z" fill="none" stroke="#d0d0d0" stroke-width="1.3" stroke-linejoin="round"/><path d="M7.5 17.5a1.6 1.6 0 0 0 3 0" fill="none" stroke="#d0d0d0" stroke-width="1.3"/></svg>
</div>
</body></html>
